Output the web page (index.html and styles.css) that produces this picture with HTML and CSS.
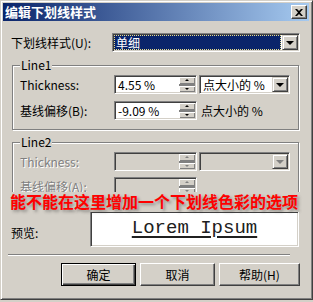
FILE: index.html
```html
<!DOCTYPE html>
<html lang="zh-CN">

<head>
    <meta charset="UTF-8">
    <meta name="viewport" content="width=device-width, initial-scale=1.0">
    <title>编辑下划线样式</title>
    <link rel="stylesheet" href="styles.css">
</head>

<body>
    <div class="window">
        <div class="titlebar">
            <span class="title">编辑下划线样式</span>
            <span class="close">
                <svg width="8" height="7" viewBox="0 0 8 7">
                    <path d="M0 0h2l2 2 2-2h2L5 3.5 8 7H6L4 5 2 7H0l3-3.5z" fill="#000" />
                </svg>
            </span>
        </div>

        <div class="row-top">
            <label>下划线样式(U):</label>
            <div class="combo">
                <span class="combo__value">单细</span>
                <span class="drop"></span>
            </div>
        </div>

        <fieldset class="group">
            <legend>Line1</legend>
            <div class="field-row">
                <label>Thickness:</label>
                <div class="spin">
                    <span class="spin__text">4.55 %</span>
                    <span class="spin__btns"><i class="up"></i><i class="down"></i></span>
                </div>
                <div class="select">
                    <span class="select__text">点大小的 %</span>
                    <span class="drop"></span>
                </div>
            </div>
            <div class="field-row field-row--second">
                <label>基线偏移(B):</label>
                <div class="spin">
                    <span class="spin__text">-9.09 %</span>
                    <span class="spin__btns"><i class="up"></i><i class="down"></i></span>
                </div>
                <span class="unit">点大小的 %</span>
            </div>
        </fieldset>

        <fieldset class="group group--disabled">
            <legend>Line2</legend>
            <div class="field-row">
                <label>Thickness:</label>
                <div class="spin">
                    <span class="spin__text"></span>
                    <span class="spin__btns"><i class="up"></i><i class="down"></i></span>
                </div>
                <div class="select">
                    <span class="select__text"></span>
                    <span class="drop"></span>
                </div>
            </div>
            <div class="field-row field-row--second2">
                <label>基线偏移(A):</label>
                <div class="spin">
                    <span class="spin__text"></span>
                    <span class="spin__btns"><i class="up"></i><i class="down"></i></span>
                </div>
            </div>
        </fieldset>

        <div class="preview-row">
            <label>预览:</label>
            <div class="preview">Lorem Ipsum</div>
        </div>

        <div class="separator"></div>

        <div class="buttons">
            <button class="btn btn--default">确定</button>
            <button class="btn">取消</button>
            <button class="btn btn--wide">帮助(H)</button>
        </div>

        <div class="note">能不能在这里增加一个下划线色彩的选项</div>
    </div>
</body>

</html>
```

FILE: styles.css
```css
* {
    margin: 0;
    padding: 0;
    box-sizing: border-box;
}

body {
    background: #d4d0c8;
    font: 12px "Noto Sans CJK SC", sans-serif;
    color: #000;
}

.window {
    position: relative;
    width: 313px;
    height: 300px;
    padding: 2px;
    border: 1px solid;
    border-color: #d4d0c8 #404040 #404040 #d4d0c8;
    box-shadow: inset 1px 1px #fff, inset -1px -1px #808080;
}

.titlebar {
    height: 18px;
    margin-right: 1px;
    display: flex;
    align-items: center;
    justify-content: space-between;
    padding: 0 2px 0 2px;
    background: linear-gradient(to right, #0a246a, #a6caf0);
}

.title {
    color: #fff;
    font-weight: bold;
    font-size: 13px;
    line-height: 18px;
}

.close {
    width: 16px;
    height: 14px;
    display: flex;
    align-items: center;
    justify-content: center;
    background: #d4d0c8;
    border: 1px solid;
    border-color: #fff #404040 #404040 #fff;
    box-shadow: inset -1px -1px #808080;
}

/* sunken field */
.combo,
.spin,
.select,
.preview {
    border: 1px solid;
    border-color: #808080 #fff #fff #808080;
    box-shadow: inset 1px 1px #404040, inset -1px -1px #d4d0c8;
    padding: 1px;
    background: #fff;
}

.drop {
    width: 16px;
    flex: none;
    display: flex;
    align-items: center;
    justify-content: center;
    background: #d4d0c8;
    border: 1px solid;
    border-color: #d4d0c8 #404040 #404040 #d4d0c8;
    box-shadow: inset 1px 1px #fff, inset -1px -1px #808080;
}

.drop::after {
    content: "";
    border: 4px solid transparent;
    border-top-color: #000;
    border-bottom: 0;
    margin-top: 1px;
}

.row-top {
    display: flex;
    align-items: center;
    height: 19px;
    margin-top: 12px;
    padding-left: 8px;
}

.row-top label {
    width: 101px;
}

.combo {
    width: 188px;
    height: 19px;
    display: flex;
}

.combo__value {
    flex: 1;
    background: #0a246a;
    color: #fff;
    border: 1px dotted #e8dc8c;
    line-height: 13px;
    padding-left: 1px;
    margin-right: 1px;
}

.group {
    margin: 6px 0 0 9px;
    width: 287px;
    border: 1px solid #808080;
    box-shadow: inset 1px 1px #fff, 1px 1px #fff;
    padding: 0 0 9px 7px;
}

.group legend {
    padding: 0 1px;
    line-height: 14px;
    background: #d4d0c8;
}

.group--disabled {
    margin-top: 5px;
    padding-bottom: 10px;
    color: #808080;
    text-shadow: 1px 1px #fff;
}

.group--disabled legend {
    color: #000;
    text-shadow: none;
}

.field-row {
    display: flex;
    align-items: center;
    height: 19px;
    margin-top: 3px;
}

.field-row--second {
    margin-top: 7px;
}

.field-row--second2 {
    margin-top: 6px;
}

.field-row label {
    width: 94px;
}

.spin {
    width: 83px;
    height: 19px;
    display: flex;
}

.spin__text {
    flex: 1;
    padding-left: 2px;
    line-height: 15px;
    color: #000;
    text-shadow: none;
}

.spin__btns {
    width: 16px;
    display: flex;
    flex-direction: column;
    background: #808080;
    gap: 2px;
}

.spin__btns i {
    flex: 1;
    display: flex;
    align-items: center;
    justify-content: center;
    background: #d4d0c8;
    box-shadow: inset 1px 1px #fff, inset -1px -1px #808080;
}

.spin__btns .up::after,
.spin__btns .down::after {
    content: "";
    border: 2px solid transparent;
}

.spin__btns .up::after {
    border-bottom-color: #000;
    border-top: 0;
}

.spin__btns .down::after {
    border-top-color: #000;
    border-bottom: 0;
}

.select {
    width: 91px;
    height: 19px;
    margin-left: 2px;
    display: flex;
}

.select__text {
    flex: 1;
    padding-left: 2px;
    line-height: 15px;
}

.unit {
    margin-left: 4px;
}

.group--disabled .spin,
.group--disabled .select {
    background: #d4d0c8;
}

.group--disabled .spin__btns i::after,
.group--disabled .drop::after {
    border-top-color: #808080;
    border-bottom-color: #808080;
}

.preview-row {
    display: flex;
    margin-top: 4px;
    padding-left: 8px;
}

.preview-row label {
    width: 79px;
    padding-top: 13px;
}

.preview {
    width: 209px;
    height: 36px;
    text-align: center;
    font: 19px "Liberation Mono", monospace;
    text-decoration: underline;
    text-decoration-thickness: 2px;
    text-underline-offset: 3px;
    line-height: 30px;
    color: #202020;
}

.separator {
    margin: 7px 0 0 5px;
    width: 282px;
    height: 2px;
    border-top: 1px solid #808080;
    border-bottom: 1px solid #fff;
}

.buttons {
    display: flex;
    justify-content: flex-end;
    gap: 4px;
    margin-top: 7px;
    padding-right: 10px;
}

.btn {
    width: 75px;
    height: 23px;
    font: 12px "Noto Sans CJK SC", sans-serif;
    background: #d4d0c8;
    border: 1px solid;
    border-color: #fff #404040 #404040 #fff;
    box-shadow: inset -1px -1px #808080;
}

.btn--wide {
    width: 81px;
}

.btn--default {
    border-color: #000;
    box-shadow: inset 1px 1px #fff, inset -1px -1px #404040, inset -2px -2px #808080;
}

.note {
    position: absolute;
    left: 8px;
    top: 191px;
    width: 294px;
    padding: 0 0 2px 1px;
    background: #d4d0c8;
    color: #ff0000;
    font: bold 16px/18px "Noto Sans CJK SC", sans-serif;
    white-space: nowrap;
    text-shadow: 2px 2px 3px rgba(60, 60, 60, 0.45);
}
```
